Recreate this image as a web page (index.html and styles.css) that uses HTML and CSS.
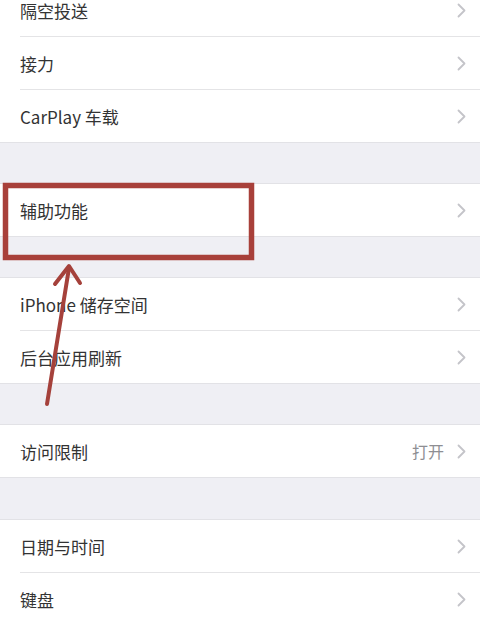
FILE: index.html
```html
<!DOCTYPE html>
<html lang="zh-CN">
<head>
<meta charset="utf-8">
<title>设置</title>
<link rel="stylesheet" href="styles.css">
</head>
<body>
<div class="page">
  <div class="group group-first">
    <div class="row"><div class="row-in"><span class="label">隔空投送</span><svg class="chev" viewBox="0 0 9 15"><polyline points="1.5,1.5 7.5,7.5 1.5,13.5"/></svg></div></div>
    <div class="row"><div class="row-in"><span class="label">接力</span><svg class="chev" viewBox="0 0 9 15"><polyline points="1.5,1.5 7.5,7.5 1.5,13.5"/></svg></div></div>
    <div class="row"><div class="row-in"><span class="label">CarPlay 车载</span><svg class="chev" viewBox="0 0 9 15"><polyline points="1.5,1.5 7.5,7.5 1.5,13.5"/></svg></div></div>
  </div>
  <div class="group">
    <div class="row"><div class="row-in"><span class="label">辅助功能</span><svg class="chev" viewBox="0 0 9 15"><polyline points="1.5,1.5 7.5,7.5 1.5,13.5"/></svg></div></div>
  </div>
  <div class="group">
    <div class="row"><div class="row-in"><span class="label">iPhone 储存空间</span><svg class="chev" viewBox="0 0 9 15"><polyline points="1.5,1.5 7.5,7.5 1.5,13.5"/></svg></div></div>
    <div class="row"><div class="row-in"><span class="label">后台应用刷新</span><svg class="chev" viewBox="0 0 9 15"><polyline points="1.5,1.5 7.5,7.5 1.5,13.5"/></svg></div></div>
  </div>
  <div class="group">
    <div class="row"><div class="row-in"><span class="label">访问限制</span><span class="value">打开</span><svg class="chev" viewBox="0 0 9 15"><polyline points="1.5,1.5 7.5,7.5 1.5,13.5"/></svg></div></div>
  </div>
  <div class="group group-wide">
    <div class="row"><div class="row-in"><span class="label">日期与时间</span><svg class="chev" viewBox="0 0 9 15"><polyline points="1.5,1.5 7.5,7.5 1.5,13.5"/></svg></div></div>
    <div class="row"><div class="row-in"><span class="label">键盘</span><svg class="chev" viewBox="0 0 9 15"><polyline points="1.5,1.5 7.5,7.5 1.5,13.5"/></svg></div></div>
  </div>
  <svg class="annot" viewBox="0 0 480 622" width="480" height="622">
    <rect x="5.5" y="185.5" width="246" height="72" class="box"/>
    <line x1="47" y1="404" x2="69" y2="268" class="arrow"/>
    <polyline points="55,284 69,266 80,283" class="arrow head"/>
  </svg>
</div>
</body>
</html>
```
FILE: styles.css
```css
html, body {
  margin: 0;
  padding: 0;
}
body {
  background: #efeff4;
  font-family: "Noto Sans CJK SC", "Noto Sans", sans-serif;
  color: #333333;
  overflow: hidden;
}
.page {
  position: relative;
  width: 480px;
  height: 622px;
  overflow: hidden;
}
.group {
  margin-top: 42px;
  background: #ffffff;
  box-shadow: 0 -1px 0 #e2e2e6, 0 1px 0 #e2e2e6;
}
.group-first {
  margin-top: -16px;
}
.group-wide {
  margin-top: 43px;
}
.row {
  background: #ffffff;
  padding-left: 20px;
}
.row-in {
  height: 52px;
  display: flex;
  align-items: center;
  padding-right: 14px;
}
.row + .row .row-in {
  border-top: 1px solid #e4e4e6;
}
.label {
  flex: 1;
  font-size: 17px;
  letter-spacing: 0;
}
.value {
  font-size: 16px;
  color: #8e8e93;
  margin-right: 13px;
}
.chev {
  width: 9px;
  height: 15px;
  fill: none;
  stroke: #c4c4c9;
  stroke-width: 1.8;
  stroke-linecap: round;
  stroke-linejoin: round;
}
.annot {
  position: absolute;
  left: 0;
  top: 0;
  pointer-events: none;
}
.box {
  fill: none;
  stroke: #a8403a;
  stroke-width: 5.5;
}
.arrow {
  fill: none;
  stroke: #a5413b;
  stroke-width: 4;
  stroke-linecap: round;
  stroke-linejoin: round;
}
```
